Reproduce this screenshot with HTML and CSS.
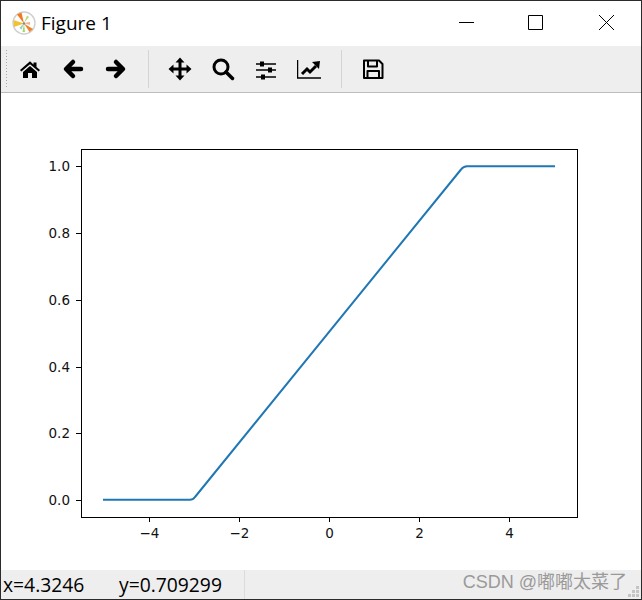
FILE: index.html
```html
<!DOCTYPE html>
<html lang="en">
<head>
<meta charset="utf-8">
<title>Figure 1</title>
<link rel="stylesheet" href="styles.css">
</head>
<body>
<div class="window">
  <header class="titlebar">
    <svg class="app-icon" width="24" height="24" viewBox="0 0 24 24">
      <circle cx="12" cy="12" r="11" fill="#fff" stroke="#cfcfcf" stroke-width="1.4"/>
      <polygon points="12,12.500 5,3.500 9.500,1.500" fill="#f47a20"/>
      <polygon points="12,12.500 17.500,21 21,18" fill="#f0832e"/>
      <polygon points="12,12.500 1.500,9 2,16" fill="#f2c230"/>
      <polygon points="12,12 7.500,17 9.500,18.500" fill="#8fd1c0"/>
      <polygon points="12,12 10.500,21 13,21" fill="#a5d86a"/>
      <polygon points="12,12 15,4.500 17,6" fill="#b9d97a"/>
      <polygon points="12,12 18,11 18,14" fill="#f5b08a"/>
      <circle cx="12" cy="12.500" r="1.200" fill="#8a8a8a"/>
    </svg>
    <span class="title">Figure 1</span>
    <div class="controls">
      <svg class="ctl-min" width="15" height="15" viewBox="0 0 15 15"><path class="ctl" d="M0 7.500H15"/></svg>
      <svg class="ctl-max" width="15" height="15" viewBox="0 0 15 15"><path class="ctl" d="M.5.5H14.500V14.500H.5Z"/></svg>
      <svg width="15" height="15" viewBox="0 0 15 15"><path class="ctl" d="M0 0L15 15M15 0L0 15"/></svg>
    </div>
  </header>

  <nav class="toolbar">
    <div class="grip"></div>
    <div class="tool"><svg width="24" height="24" viewBox="0 0 24 24"><path class="fill" d="M12 4.200L2 13l1.300 1.500L12 7.200l8.700 7.300L22 13l-3.500-3V5.500h-3v2z"/><path class="fill" d="M5 15l7-6 7 6v6h-5v-5h-4v5H5z"/></svg></div>
    <div class="tool"><svg width="24" height="24" viewBox="0 0 24 24"><path class="thick" d="M20 12H6M12 5L5 12l7 7"/></svg></div>
    <div class="tool"><svg width="24" height="24" viewBox="0 0 24 24"><path class="thick" d="M4 12H18M12 5l7 7-7 7"/></svg></div>
    <div class="sep"></div>
    <div class="tool"><svg width="24" height="24" viewBox="0 0 24 24"><path class="line-bold" d="M12 3V21M3 12H21"/><path class="fill" d="M12 .5l4.500 5h-9zM12 23.500l-4.500-5h9zM.5 12l5-4.500v9zM23.500 12l-5 4.500v-9z"/></svg></div>
    <div class="tool"><svg width="24" height="24" viewBox="0 0 24 24"><circle class="ring" cx="10" cy="10" r="7"/><path class="handle" d="M15 15l6.500 6.500"/></svg></div>
    <div class="tool"><svg width="24" height="24" viewBox="0 0 24 24"><path class="thin" d="M2 7H22M2 13H22M2 20H22"/><path class="fill" d="M6 4.500h4v5H6zM14 10.500h4v5h-4zM7 17.500h4v5H7z"/></svg></div>
    <div class="tool"><svg width="24" height="24" viewBox="0 0 24 24"><path class="thin" d="M.5 3V21H24"/><path class="zig" d="M5 17l5-5 3 3 6-6"/><path class="fill" d="M15 5l8-1-1 8z"/></svg></div>
    <div class="sep"></div>
    <div class="tool"><svg width="24" height="24" viewBox="0 0 24 24"><path class="line" d="M3 3.500H18L21.500 7V21H3Z"/><path class="line" d="M7 4V9.500H16V4M6.500 21V14H18V21"/></svg></div>
  </nav>

  <main class="canvas">
    <svg class="plot" width="640" height="477" viewBox="1 93 640 477">
      <rect class="axes" x="81.500" y="149.500" width="496" height="368"/>
      <g class="ticks">
        <path d="M149.500 518V522M239.500 518V522M329.500 518V522M419.500 518V522M509.500 518V522"/>
        <path d="M76 500.500H81M76 433.500H81M76 367.500H81M76 300.500H81M76 233.500H81M76 166.500H81"/>
      </g>
      <g class="xlabels">
        <text x="149.500" y="538">−4</text>
        <text x="239.500" y="538">−2</text>
        <text x="329.500" y="538">0</text>
        <text x="419.500" y="538">2</text>
        <text x="509.500" y="538">4</text>
      </g>
      <g class="ylabels">
        <text x="70" y="505">0.0</text>
        <text x="70" y="438">0.2</text>
        <text x="70" y="372">0.4</text>
        <text x="70" y="305">0.6</text>
        <text x="70" y="238">0.8</text>
        <text x="70" y="171">1.0</text>
      </g>
      <path class="curve" d="M103 499.800H190Q193 499.800 195 497L461 169.500Q463.500 166.200 467 166.200H555"/>
    </svg>
  </main>

  <footer class="status">
    <span class="coord-x">x=4.3246</span>
    <span class="coord-y">y=0.709299</span>
    <div class="status-sep"></div>
    <svg class="size-grip" width="12" height="12" viewBox="0 0 12 12"><path class="grip-dots" d="M8 0h3v3H8zM4 4h3v3H4zM8 4h3v3H8zM0 8h3v3H0zM4 8h3v3H4zM8 8h3v3H8z"/></svg>
  </footer>
  <div class="watermark">CSDN @嘟嘟太菜了</div>
</div>
</body>
</html>
```
FILE: styles.css
```css
* { box-sizing: border-box; }
html, body { margin: 0; padding: 0; background: #fff; overflow: hidden; }
.window {
  position: relative;
  width: 642px;
  height: 600px;
  border: 1px solid #2b2b2b;
  display: flex;
  flex-direction: column;
  font-family: "Open Sans", "Noto Sans", sans-serif;
  color: #000;
}
.titlebar {
  height: 45px;
  display: flex;
  align-items: center;
  padding: 0 27px 2px 11px;
  background: #fff;
  flex: none;
}
.app-icon { flex: none; }
.title { margin-left: 5px; font-size: 19px; line-height: 24px; }
.controls { margin-left: auto; display: flex; align-items: center; }
.controls svg { display: block; }
.ctl-min { margin-right: 54px; }
.ctl-max { margin-right: 56px; }
.ctl { fill: none; stroke: #000; stroke-width: 1; }
.toolbar {
  height: 47px;
  flex: none;
  display: flex;
  align-items: center;
  background: #eee;
  border-bottom: 1px solid #bcbcbc;
}
.grip {
  width: 3px;
  height: 40px;
  margin-left: 4px;
  margin-right: 1px;
  background-image: radial-gradient(#a8a8a8 1px, transparent 1px);
  background-size: 3px 3px;
}
.tool { width: 43px; display: flex; justify-content: center; align-items: center; }
.tool svg { display: block; margin-right: 2px; }
.sep { width: 21px; height: 38px; display: flex; justify-content: center; }
.sep::before { content: ""; width: 1px; height: 100%; background: #d4d4d4; }
.fill { fill: #000; }
.thick { fill: none; stroke: #000; stroke-width: 4.500; stroke-linecap: round; stroke-linejoin: round; }
.line { fill: none; stroke: #000; stroke-width: 2; stroke-linejoin: round; }
.line-bold { fill: none; stroke: #000; stroke-width: 3; }
.thin { fill: none; stroke: #000; stroke-width: 1.500; }
.zig { fill: none; stroke: #000; stroke-width: 3; }
.ring { fill: none; stroke: #000; stroke-width: 3; }
.handle { fill: none; stroke: #000; stroke-width: 3.500; stroke-linecap: round; }
.canvas { flex: 1; background: #fff; min-height: 0; }
.plot { display: block; }
.axes { fill: #fff; stroke: #000; stroke-width: 1; }
.ticks path { fill: none; stroke: #000; stroke-width: 1; }
.xlabels text, .ylabels text { font-family: "DejaVu Sans", sans-serif; font-size: 13.500px; fill: #111; }
.xlabels text { text-anchor: middle; }
.ylabels text { text-anchor: end; }
.curve { fill: none; stroke: #1f77b4; stroke-width: 2; stroke-linejoin: round; }
.status {
  height: 29px;
  flex: none;
  display: flex;
  align-items: center;
  position: relative;
  background: #eee;
  font-size: 19.300px;
  line-height: 26px;
  white-space: nowrap;
}
.coord-x { margin-left: 2px; width: 116px; }
.coord-y { width: 125px; }
.status-sep { width: 1px; height: 100%; background: #dcdcdc; }
.size-grip { position: absolute; right: 1px; bottom: 1px; }
.grip-dots { fill: #c4c4c4; }
.watermark {
  position: absolute;
  right: 14px;
  bottom: 6px;
  font-family: "Liberation Sans", "Noto Sans CJK SC", sans-serif;
  font-size: 18px;
  line-height: 22px;
  color: #9a9a9a;
  white-space: nowrap;
}
```
